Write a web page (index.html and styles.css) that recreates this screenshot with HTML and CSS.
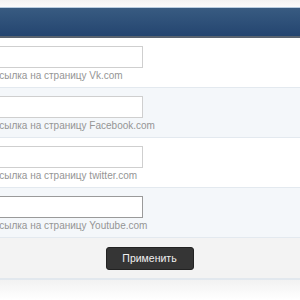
FILE: index.html
```html
<!DOCTYPE html>
<html lang="ru">
<head>
  <meta charset="UTF-8">
  <title>Социальные сети</title>
  <link rel="stylesheet" href="styles.css">
</head>
<body>

  <div class="topline"></div>
  <div class="panel-head"></div>

  <!-- поля ссылок -->
  <form class="social-form">
    <div class="field-row">
      <input type="text" class="field-input">
      <div class="field-hint">Ссылка на страницу Vk.com</div>
    </div>
    <div class="field-row alt">
      <input type="text" class="field-input">
      <div class="field-hint">Ссылка на страницу Facebook.com</div>
    </div>
    <div class="field-row">
      <input type="text" class="field-input">
      <div class="field-hint">Ссылка на страницу twitter.com</div>
    </div>
    <div class="field-row alt">
      <input type="text" class="field-input focus">
      <div class="field-hint">Ссылка на страницу Youtube.com</div>
    </div>

    <div class="form-footer">
      <button type="button" class="apply-btn">Применить</button>
    </div>
  </form>

  <div class="bottom-fade"></div>

</body>
</html>
```

FILE: styles.css
```css
body {
  margin: 0;
  background: #fff;
  font-family: "Liberation Sans", Arial, sans-serif;
  overflow: hidden;
}

.topline {
  height: 7px;
  background: linear-gradient(#f2f2f2, #fbfbfb);
  border-bottom: 1px solid #b9cde0;
}

.panel-head {
  height: 28px;
  background: linear-gradient(#385b81, #244570);
  border-bottom: 2px solid #5a6470;
}

.social-form {
  margin: 0;
}

.field-row {
  padding: 8px 0 0 0;
  height: 41px;
  border-bottom: 1px solid #e3e9ef;
  background: #fff;
}

.field-row.alt {
  background: #f4f7fa;
}

.field-input {
  display: block;
  box-sizing: border-box;
  width: 152px;
  height: 22px;
  margin: 0 0 0 -9px;
  border: 1px solid #cfcfcf;
  background: #fff;
  padding: 0 4px;
  outline: none;
}

.field-input.focus {
  border-color: #9a9a9a;
}

.field-hint {
  margin: 1px 0 0 -8px;
  font-size: 10px;
  line-height: 13px;
  color: #959595;
}

.form-footer {
  height: 40px;
  background: #f3f3f3;
  border-bottom: 2px solid #e2e8ee;
  display: flex;
  justify-content: center;
  align-items: center;
}

.apply-btn {
  width: 88px;
  height: 23px;
  margin-left: -1px;
  background: #353535;
  color: #f0f0f0;
  border: 1px solid #222;
  border-radius: 3px;
  font-family: "Liberation Sans", Arial, sans-serif;
  font-size: 10.5px;
  cursor: pointer;
}

.bottom-fade {
  height: 20px;
  background: linear-gradient(#f2f2f2, #fff);
}
```
